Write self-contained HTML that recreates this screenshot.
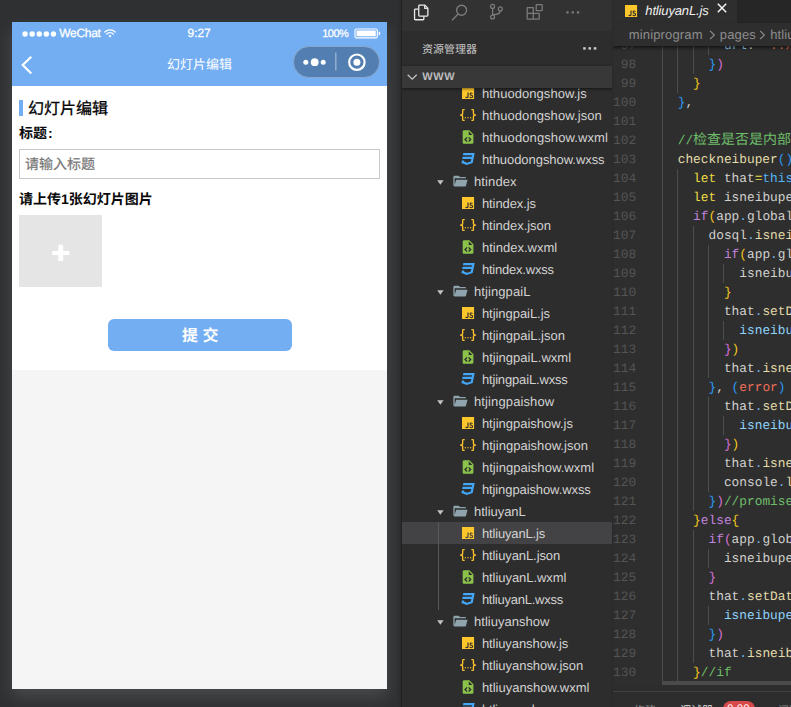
<!DOCTYPE html>
<html lang="zh-CN">
<head>
<meta charset="utf-8">
<title>幻灯片编辑 - htliuyanL.js</title>
<style>
*{box-sizing:border-box;margin:0;padding:0}
html,body{width:791px;height:707px;overflow:hidden;background:#2f3032;font-family:"Liberation Sans",sans-serif;text-rendering:geometricPrecision}
#app{position:relative;width:791px;height:707px;overflow:hidden;background:#2f3032}
.abs{position:absolute}
/* ---------- simulator ---------- */
#sim{position:absolute;left:0;top:0;width:401px;height:707px;background:linear-gradient(90deg,#2f3032 0,#2f3032 397px,#2a2b2d 401px)}
#phone{position:absolute;left:12px;top:22px;width:375px;height:667px;background:#f5f5f5;box-shadow:0 8px 16px 0 rgba(255,255,255,.13);overflow:hidden}
#hdr{position:absolute;left:0;top:0;width:375px;height:64px;background:#74aef2;color:#fff}
#page{position:absolute;left:0;top:64px;width:375px;height:284px;background:#fff}
.st{position:absolute;white-space:pre;color:#fff;-webkit-text-stroke:0.25px #fff}
#caps{position:absolute;left:280.7px;top:23.6px;width:87px;height:32px;border-radius:16px;background:#527eb1;border:1px solid #86a6cb}
/* ---------- sidebar ---------- */
#split{position:absolute;left:401px;top:0;width:1px;height:707px;background:#222223}
#side{position:absolute;left:402px;top:0;width:211px;height:707px;background:#2d2d2d;overflow:hidden}
#act{position:absolute;left:0;top:0;width:211px;height:30.5px;background:#323233}
#www{position:absolute;left:0;top:66px;width:211px;height:22px;background:#383839;box-shadow:0 1px 3px rgba(0,0,0,.55);z-index:3}
.row{position:absolute;left:0;width:211px;height:22px}
.row.sel{background:#434345}
.ic{position:absolute;display:block;overflow:visible}
.lbl{position:absolute;top:0.6px;height:22px;line-height:21px;font-size:13px;color:#d2d2d2;white-space:pre}
/* ---------- editor ---------- */
#ed{position:absolute;left:613px;top:0;width:178px;height:707px;background:#2e2e2e;overflow:hidden}
#tabs{position:absolute;left:0;top:0;width:178px;height:23px;background:#262627}
#tab{position:absolute;left:0;top:0;width:124px;height:23px;background:#2e2e2e}
#bc{position:absolute;left:0;top:23px;width:178px;height:23px;background:#2e2e2e;color:#8d8d8d;font-size:13px;line-height:23.4px;white-space:pre;box-shadow:0 2px 3px rgba(0,0,0,.55);z-index:4}
#codewrap{position:absolute;left:0;top:46px;width:178px;height:639px;overflow:hidden}
#code{position:absolute;left:0;top:-46px;width:400px;height:707px;font-family:"Liberation Mono",monospace;font-size:12.83px}
.ln{position:absolute;left:0;width:400px;height:19px;line-height:19px;white-space:pre}
.no{position:absolute;left:0;width:23.2px;text-align:right;color:#545454}
.gd{position:absolute;top:0;width:1px;height:19px;background:#4d4d4d}
.tx{position:absolute;top:0}
.g{color:#f2c81e}.p{color:#d670d6}.b{color:#2b9bf5}.k{color:#c283dc}.y{color:#efdc45}.f{color:#e3dcaa}
.v{color:#8fd3fb}.w{color:#d2d2ce}.c{color:#6fbf6a}.s{color:#ee6f59}.d{color:#6db3ea}.t{color:#52b4f5}
#hs{position:absolute;left:49.4px;top:681px;width:140px;height:4px;background:#4b4b4b}
#panel{position:absolute;left:0;top:685px;width:178px;height:22px;background:#2d2d2d}
svg text{font-family:"Liberation Sans","Noto Sans CJK SC",sans-serif}
</style>
</head>
<body>
<div id="app">

<!-- ================= simulator ================= -->
<div id="sim">
 <div id="phone">
  <div id="hdr">
   <!-- status bar -->
   <svg class="abs" style="left:9.6px;top:8.8px" width="36" height="6" viewBox="0 0 36 6"><g fill="#fff"><circle cx="3.05" cy="3" r="2.7"/><circle cx="10.15" cy="3" r="2.7"/><circle cx="17.25" cy="3" r="2.7"/><circle cx="24.35" cy="3" r="2.7"/><circle cx="31.45" cy="3" r="2.7"/></g></svg>
   <span class="st" style="left:47.2px;top:4px;font-size:12px;line-height:14px;letter-spacing:-0.291px">WeChat</span>
   <svg class="abs" style="left:92.4px;top:7.2px" width="12" height="9" viewBox="0 0 12 9"><g fill="none" stroke="#fff" stroke-width="1.25" stroke-linecap="round"><path d="M0.800 3.000a7.300 7.300 0 0 1 10.400 0"/><path d="M2.700 5.000a4.600 4.600 0 0 1 6.600 0"/></g><path d="M4.500 6.800a2.100 2.100 0 0 1 3.000 0l-1.500 1.700z" fill="#fff"/></svg>
   <span class="st" style="left:175.6px;top:4px;font-size:12px;line-height:14px;letter-spacing:-0.1px">9:27</span>
   <span class="st" style="left:310.2px;top:6px;font-size:11px;line-height:13px;letter-spacing:-0.483px">100%</span>
   <svg class="abs" style="left:341.5px;top:5.6px" width="28" height="11" viewBox="0 0 28 11"><rect x="1.000" y="1.000" width="22.300" height="8.900" rx="1.500" fill="none" stroke="#fff" stroke-width="1.100"/><rect x="2.550" y="2.550" width="19.200" height="5.800" rx="0.400" fill="#fff"/><path d="M24.700 3.600q1.600 0.300 1.600 1.800t-1.600 1.800z" fill="#fff"/></svg>
   <!-- nav bar -->
   <svg class="abs" style="left:9px;top:33px" width="12" height="20" viewBox="0 0 12 20"><path d="M10.300 1.800l-8.600 8.300 8.600 8.300" fill="none" stroke="#fff" stroke-width="2.150"/></svg>
   <div class="abs" style="left:154.600px;top:35.600px"><svg role="img" aria-label="幻灯片编辑" width="65.00" height="13.00" viewBox="0 -11.44 65.00 13.00" style="display:block;overflow:visible;" ><title>幻灯片编辑</title><text x="0" y="0" font-size="13" fill="#fff">幻灯片编辑</text></svg></div>
   <div id="caps">
    <svg class="abs" style="left:0;top:0" width="85" height="30" viewBox="0 0 85 30"><circle cx="11.800" cy="15.200" r="2.500" fill="#fff"/><circle cx="20.700" cy="15.200" r="3.900" fill="#fff"/><circle cx="29.200" cy="15.200" r="2.500" fill="#fff"/><rect x="41.300" y="5.600" width="1.1" height="17.800" fill="#a9c0dd"/><circle cx="62.900" cy="15.200" r="7.700" fill="none" stroke="#fff" stroke-width="2.2"/><circle cx="62.900" cy="15.200" r="3.500" fill="#fff"/></svg>
   </div>
  </div>
  <div id="page">
   <div class="abs" style="left:7px;top:14px;width:4px;height:15.500px;background:#74aef2"></div>
   <div class="abs" style="left:16.300px;top:13.800px"><svg role="img" aria-label="幻灯片编辑" width="80.00" height="16.00" viewBox="0 -14.08 80.00 16.00" style="display:block;overflow:visible;" ><title>幻灯片编辑</title><text x="0" y="0" font-size="16" fill="#000" stroke="#000" stroke-width="0.3">幻灯片编辑</text></svg></div>
   <div class="abs" style="left:7.200px;top:40.000px;white-space:nowrap;font-size:0;line-height:0"><svg role="img" aria-label="标题" width="28.00" height="14.00" viewBox="0 -12.32 28.00 14.00" style="display:block;overflow:visible;display:inline-block;" ><title>标题</title><text x="0" y="0" font-size="14" font-weight="bold" fill="#0a0a0a">标题</text></svg><svg role="img" aria-label=":" width="4.55" height="14.00" viewBox="0 -12.32 4.55 14.00" style="display:block;overflow:visible;display:inline-block;margin-left:1.3px;" ><title>:</title><text x="0" y="0" font-size="14" font-weight="bold" fill="#0a0a0a">:</text></svg></div>
   <div class="abs" style="left:7px;top:63px;width:361px;height:30px;border:1px solid #c8c8c8;background:#fff"></div>
   <div class="abs" style="left:12.800px;top:71.000px"><svg role="img" aria-label="请输入标题" width="70.00" height="14.00" viewBox="0 -12.32 70.00 14.00" style="display:block;overflow:visible;" ><title>请输入标题</title><text x="0" y="0" font-size="14" fill="#777777" stroke="#777777" stroke-width="0.2">请输入标题</text></svg></div>
   <div class="abs" style="left:7.200px;top:105.600px"><svg role="img" aria-label="请上传1张幻灯片图片" width="134.26" height="14.00" viewBox="0 -12.32 134.26 14.00" style="display:block;overflow:visible;" ><title>请上传1张幻灯片图片</title><text x="0" y="0" font-size="14" font-weight="bold" fill="#0a0a0a">请上传1张幻灯片图片</text></svg></div>
   <div class="abs" style="left:7px;top:129px;width:83px;height:71.500px;background:#e5e5e5">
     <svg class="abs" style="left:0;top:0" width="83" height="72" viewBox="0 0 83 72"><path d="M33.300 36.000h17.000v4.000h-17.000zM39.350 29.800h4.800v16.300h-4.800z" fill="#fff"/></svg>
   </div>
   <div class="abs" style="left:96px;top:233px;width:184px;height:32px;border-radius:6px;background:#74aef2"></div>
   <div class="abs" style="left:169.800px;top:241.000px"><svg role="img" aria-label="提 交" width="36.80" height="16.00" viewBox="0 -14.08 36.80 16.00" style="display:block;overflow:visible;" ><title>提 交</title><text x="0" y="0" font-size="16" font-weight="bold" fill="#fff" xml:space="preserve">提 交</text></svg></div>
  </div>
 </div>
</div>
<div id="split"></div>

<!-- ================= sidebar ================= -->
<div id="side">
 <div id="act">
  <!-- files -->
  <svg class="abs" style="left:10.500px;top:3.500px" width="17" height="17" viewBox="0 0 17 17"><g fill="none" stroke="#e9e9e9" stroke-width="1.300" stroke-linejoin="round"><path d="M6.550 1.150h5.300l3.000 3.000v7.100a0.800 0.800 0 0 1-0.800 0.800h-7.500a0.800 0.800 0 0 1-0.800-0.800v-9.300a0.800 0.800 0 0 1 0.800-0.800z"/><path d="M5.400 5.050h-3.050a0.800 0.800 0 0 0-0.800 0.800v9.100a0.800 0.800 0 0 0 0.800 0.800h7.700a0.800 0.800 0 0 0 0.800-0.800v-2.600"/><path d="M11.700 1.300v3.000h3.000"/></g></svg>
  <!-- search -->
  <svg class="abs" style="left:48.500px;top:3.500px" width="17" height="17" viewBox="0 0 17 17"><g fill="none" stroke="#7c7c7c" stroke-width="1.350"><circle cx="10.600" cy="6.200" r="5.000"/><path d="M7.200 10.000l-6.200 6.300"/></g></svg>
  <!-- scm -->
  <svg class="abs" style="left:86.500px;top:3.200px" width="16" height="17" viewBox="0 0 16 17"><g fill="none" stroke="#7c7c7c" stroke-width="1.250"><circle cx="3.600" cy="3.400" r="1.950"/><circle cx="3.600" cy="14.000" r="1.950"/><circle cx="11.300" cy="5.900" r="1.950"/><path d="M3.600 5.400v6.600M11.300 7.900c0 2.600-2.300 3.200-7.500 3.900"/></g></svg>
  <!-- extensions -->
  <svg class="abs" style="left:123.800px;top:3.300px" width="18" height="17" viewBox="0 0 18 17"><g fill="none" stroke="#7c7c7c" stroke-width="1.250" stroke-linejoin="round"><path d="M1.200 4.600h6.100v11.400h-6.100zM1.200 10.300h12.000M7.300 10.300h5.900v5.700h-5.900"/><rect x="10.200" y="1.700" width="6.000" height="5.800" rx="0.600"/></g></svg>
  <!-- more -->
  <svg class="abs" style="left:164.200px;top:10.800px" width="14" height="3" viewBox="0 0 14 3"><g fill="#7c7c7c"><rect x="0.300" y="0.300" width="2.300" height="2.200"/><rect x="5.600" y="0.300" width="2.300" height="2.200"/><rect x="10.900" y="0.300" width="2.300" height="2.200"/></g></svg>
 </div>
 <div class="abs" style="left:19.800px;top:43.300px"><svg role="img" aria-label="资源管理器" width="55.00" height="11.00" viewBox="0 -9.68 55.00 11.00" style="display:block;overflow:visible;" ><title>资源管理器</title><text x="0" y="0" font-size="11" fill="#c9c9c9">资源管理器</text></svg></div>
 <svg class="abs" style="left:180.600px;top:47.400px" width="14" height="3" viewBox="0 0 14 3"><g fill="#cfcfcf"><rect x="0.200" y="0.200" width="2.500" height="2.400"/><rect x="5.500" y="0.200" width="2.500" height="2.400"/><rect x="10.800" y="0.200" width="2.500" height="2.400"/></g></svg>
 <div class="abs" style="left:210px;top:0;width:1px;height:707px;background:#292929;z-index:5"></div>
 <div id="www">
  <svg class="abs" style="left:4.500px;top:8.100px" width="12" height="7" viewBox="0 0 12 7"><path d="M0.700 0.700l4.500 4.400 4.500-4.400" fill="none" stroke="#c5c5c5" stroke-width="1.250"/></svg>
  <span class="abs" style="left:20.300px;top:1.3px;line-height:21.500px;font-size:11px;font-weight:bold;color:#bcbcbc;letter-spacing:0.551px">WWW</span>
 </div>
 <div class="abs" style="left:36.400px;top:522px;width:1px;height:88px;background:#585858;z-index:2"></div>
<div class="row" style="top:82.0px"><svg class="ic" style="left:57.85px;top:2.90px" width="16.1" height="16.1" viewBox="0 0 24 24"><path fill="#fdc72b" d="M3,3H21V21H3V3M7.73,18.04C8.13,18.89 8.92,19.59 10.27,19.59C11.77,19.59 12.8,18.79 12.8,17.04V11.26H11.1V17C11.1,17.86 10.75,18.08 10.2,18.08C9.62,18.08 9.38,17.68 9.11,17.21L7.73,18.04M13.71,17.86C14.21,18.84 15.22,19.59 16.8,19.59C18.4,19.59 19.6,18.76 19.6,17.23C19.6,15.82 18.79,15.19 17.35,14.57L16.93,14.39C16.2,14.08 15.89,13.87 15.89,13.37C15.89,12.96 16.2,12.64 16.7,12.64C17.18,12.64 17.5,12.85 17.79,13.37L19.1,12.5C18.55,11.54 17.77,11.17 16.7,11.17C15.19,11.17 14.22,12.13 14.22,13.4C14.22,14.78 15.03,15.43 16.25,15.95L16.67,16.13C17.45,16.47 17.91,16.68 17.91,17.26C17.91,17.74 17.46,18.09 16.76,18.09C15.93,18.09 15.45,17.66 15.09,17.06L13.71,17.86Z"/></svg><span class="lbl" style="left:79.9px;letter-spacing:0.055px">hthuodongshow.js</span></div>
<div class="row" style="top:104.0px"><svg class="ic" style="left:57.85px;top:2.90px" width="16.1" height="16.1" viewBox="0 0 24 24"><path fill="#fbc02d" d="M5,3H7V5H5V10A2,2 0 0,1 3,12A2,2 0 0,1 5,14V19H7V21H5C3.93,20.73 3,20.1 3,19V15A2,2 0 0,0 1,13H0V11H1A2,2 0 0,0 3,9V5A2,2 0 0,1 5,3M19,3A2,2 0 0,1 21,5V9A2,2 0 0,0 23,11H24V13H23A2,2 0 0,0 21,15V19A2,2 0 0,1 19,21H17V19H19V14A2,2 0 0,1 21,12A2,2 0 0,1 19,10V5H17V3H19M12,15A1,1 0 0,1 13,16A1,1 0 0,1 12,17A1,1 0 0,1 11,16A1,1 0 0,1 12,15M8,15A1,1 0 0,1 9,16A1,1 0 0,1 8,17A1,1 0 0,1 7,16A1,1 0 0,1 8,15M16,15A1,1 0 0,1 17,16A1,1 0 0,1 16,17A1,1 0 0,1 15,16A1,1 0 0,1 16,15Z"/></svg><span class="lbl" style="left:79.9px;letter-spacing:0.077px">hthuodongshow.json</span></div>
<div class="row" style="top:126.0px"><svg class="ic" style="left:57.85px;top:2.90px" width="16.1" height="16.1" viewBox="0 0 24 24"><path fill="#8bc34a" d="M13,9H18.5L13,3.5V9M6,2H14L20,8V20A2,2 0 0,1 18,22H6C4.89,22 4,21.1 4,20V4C4,2.89 4.89,2 6,2M6.12,15.5L9.86,19.24L11.28,17.83L8.95,15.5L11.28,13.17L9.86,11.76L6.12,15.5M17.28,15.5L13.54,11.76L12.12,13.17L14.45,15.5L12.12,17.83L13.54,19.24L17.28,15.5Z"/></svg><span class="lbl" style="left:79.9px;letter-spacing:0.102px">hthuodongshow.wxml</span></div>
<div class="row" style="top:148.0px"><svg class="ic" style="left:57.85px;top:2.90px" width="16.1" height="16.1" viewBox="0 0 24 24"><path fill="#42a5f5" d="M5,3L4.35,6.34H17.94L17.5,8.5H3.92L3.26,11.83H16.85L16.09,15.64L10.61,17.45L5.86,15.64L6.19,14H2.85L2.06,18L9.91,21L18.96,18L20.16,11.97L20.4,10.76L21.94,3H5Z"/></svg><span class="lbl" style="left:79.9px;letter-spacing:-0.050px">hthuodongshow.wxss</span></div>
<div class="row" style="top:170.0px"><svg class="ic" style="left:35.30000000000001px;top:9.6px" width="7" height="5" viewBox="0 0 7 5"><path d="M0.200 0.200h6.400l-3.200 4.500z" fill="#c2c2c2"/></svg><svg class="ic" style="left:49.80px;top:2.70px" width="16.1" height="16.1" viewBox="0 0 24 24"><path fill="#90a4ae" d="M19,20H4C2.89,20 2,19.1 2,18V6C2,4.89 2.89,4 4,4H10L12,6H19A2,2 0 0,1 21,8H21L4,8V18L6.14,10H23.21L20.93,18.5C20.7,19.37 19.92,20 19,20Z"/></svg><span class="lbl" style="left:72.0px;letter-spacing:0.107px">htindex</span></div>
<div class="row" style="top:192.0px"><svg class="ic" style="left:57.85px;top:2.90px" width="16.1" height="16.1" viewBox="0 0 24 24"><path fill="#fdc72b" d="M3,3H21V21H3V3M7.73,18.04C8.13,18.89 8.92,19.59 10.27,19.59C11.77,19.59 12.8,18.79 12.8,17.04V11.26H11.1V17C11.1,17.86 10.75,18.08 10.2,18.08C9.62,18.08 9.38,17.68 9.11,17.21L7.73,18.04M13.71,17.86C14.21,18.84 15.22,19.59 16.8,19.59C18.4,19.59 19.6,18.76 19.6,17.23C19.6,15.82 18.79,15.19 17.35,14.57L16.93,14.39C16.2,14.08 15.89,13.87 15.89,13.37C15.89,12.96 16.2,12.64 16.7,12.64C17.18,12.64 17.5,12.85 17.79,13.37L19.1,12.5C18.55,11.54 17.77,11.17 16.7,11.17C15.19,11.17 14.22,12.13 14.22,13.4C14.22,14.78 15.03,15.43 16.25,15.95L16.67,16.13C17.45,16.47 17.91,16.68 17.91,17.26C17.91,17.74 17.46,18.09 16.76,18.09C15.93,18.09 15.45,17.66 15.09,17.06L13.71,17.86Z"/></svg><span class="lbl" style="left:79.9px;letter-spacing:-0.077px">htindex.js</span></div>
<div class="row" style="top:214.0px"><svg class="ic" style="left:57.85px;top:2.90px" width="16.1" height="16.1" viewBox="0 0 24 24"><path fill="#fbc02d" d="M5,3H7V5H5V10A2,2 0 0,1 3,12A2,2 0 0,1 5,14V19H7V21H5C3.93,20.73 3,20.1 3,19V15A2,2 0 0,0 1,13H0V11H1A2,2 0 0,0 3,9V5A2,2 0 0,1 5,3M19,3A2,2 0 0,1 21,5V9A2,2 0 0,0 23,11H24V13H23A2,2 0 0,0 21,15V19A2,2 0 0,1 19,21H17V19H19V14A2,2 0 0,1 21,12A2,2 0 0,1 19,10V5H17V3H19M12,15A1,1 0 0,1 13,16A1,1 0 0,1 12,17A1,1 0 0,1 11,16A1,1 0 0,1 12,15M8,15A1,1 0 0,1 9,16A1,1 0 0,1 8,17A1,1 0 0,1 7,16A1,1 0 0,1 8,15M16,15A1,1 0 0,1 17,16A1,1 0 0,1 16,17A1,1 0 0,1 15,16A1,1 0 0,1 16,15Z"/></svg><span class="lbl" style="left:79.9px;letter-spacing:-0.022px">htindex.json</span></div>
<div class="row" style="top:236.0px"><svg class="ic" style="left:57.85px;top:2.90px" width="16.1" height="16.1" viewBox="0 0 24 24"><path fill="#8bc34a" d="M13,9H18.5L13,3.5V9M6,2H14L20,8V20A2,2 0 0,1 18,22H6C4.89,22 4,21.1 4,20V4C4,2.89 4.89,2 6,2M6.12,15.5L9.86,19.24L11.28,17.83L8.95,15.5L11.28,13.17L9.86,11.76L6.12,15.5M17.28,15.5L13.54,11.76L12.12,13.17L14.45,15.5L12.12,17.83L13.54,19.24L17.28,15.5Z"/></svg><span class="lbl" style="left:79.9px;letter-spacing:0.015px">htindex.wxml</span></div>
<div class="row" style="top:258.0px"><svg class="ic" style="left:57.85px;top:2.90px" width="16.1" height="16.1" viewBox="0 0 24 24"><path fill="#42a5f5" d="M5,3L4.35,6.34H17.94L17.5,8.5H3.92L3.26,11.83H16.85L16.09,15.64L10.61,17.45L5.86,15.64L6.19,14H2.85L2.06,18L9.91,21L18.96,18L20.16,11.97L20.4,10.76L21.94,3H5Z"/></svg><span class="lbl" style="left:79.9px;letter-spacing:-0.212px">htindex.wxss</span></div>
<div class="row" style="top:280.0px"><svg class="ic" style="left:35.30000000000001px;top:9.6px" width="7" height="5" viewBox="0 0 7 5"><path d="M0.200 0.200h6.400l-3.200 4.500z" fill="#c2c2c2"/></svg><svg class="ic" style="left:49.80px;top:2.70px" width="16.1" height="16.1" viewBox="0 0 24 24"><path fill="#90a4ae" d="M19,20H4C2.89,20 2,19.1 2,18V6C2,4.89 2.89,4 4,4H10L12,6H19A2,2 0 0,1 21,8H21L4,8V18L6.14,10H23.21L20.93,18.5C20.7,19.37 19.92,20 19,20Z"/></svg><span class="lbl" style="left:72.0px;letter-spacing:0.091px">htjingpaiL</span></div>
<div class="row" style="top:302.0px"><svg class="ic" style="left:57.85px;top:2.90px" width="16.1" height="16.1" viewBox="0 0 24 24"><path fill="#fdc72b" d="M3,3H21V21H3V3M7.73,18.04C8.13,18.89 8.92,19.59 10.27,19.59C11.77,19.59 12.8,18.79 12.8,17.04V11.26H11.1V17C11.1,17.86 10.75,18.08 10.2,18.08C9.62,18.08 9.38,17.68 9.11,17.21L7.73,18.04M13.71,17.86C14.21,18.84 15.22,19.59 16.8,19.59C18.4,19.59 19.6,18.76 19.6,17.23C19.6,15.82 18.79,15.19 17.35,14.57L16.93,14.39C16.2,14.08 15.89,13.87 15.89,13.37C15.89,12.96 16.2,12.64 16.7,12.64C17.18,12.64 17.5,12.85 17.79,13.37L19.1,12.5C18.55,11.54 17.77,11.17 16.7,11.17C15.19,11.17 14.22,12.13 14.22,13.4C14.22,14.78 15.03,15.43 16.25,15.95L16.67,16.13C17.45,16.47 17.91,16.68 17.91,17.26C17.91,17.74 17.46,18.09 16.76,18.09C15.93,18.09 15.45,17.66 15.09,17.06L13.71,17.86Z"/></svg><span class="lbl" style="left:79.9px;letter-spacing:-0.046px">htjingpaiL.js</span></div>
<div class="row" style="top:324.0px"><svg class="ic" style="left:57.85px;top:2.90px" width="16.1" height="16.1" viewBox="0 0 24 24"><path fill="#fbc02d" d="M5,3H7V5H5V10A2,2 0 0,1 3,12A2,2 0 0,1 5,14V19H7V21H5C3.93,20.73 3,20.1 3,19V15A2,2 0 0,0 1,13H0V11H1A2,2 0 0,0 3,9V5A2,2 0 0,1 5,3M19,3A2,2 0 0,1 21,5V9A2,2 0 0,0 23,11H24V13H23A2,2 0 0,0 21,15V19A2,2 0 0,1 19,21H17V19H19V14A2,2 0 0,1 21,12A2,2 0 0,1 19,10V5H17V3H19M12,15A1,1 0 0,1 13,16A1,1 0 0,1 12,17A1,1 0 0,1 11,16A1,1 0 0,1 12,15M8,15A1,1 0 0,1 9,16A1,1 0 0,1 8,17A1,1 0 0,1 7,16A1,1 0 0,1 8,15M16,15A1,1 0 0,1 17,16A1,1 0 0,1 16,17A1,1 0 0,1 15,16A1,1 0 0,1 16,15Z"/></svg><span class="lbl" style="left:79.9px;letter-spacing:-0.006px">htjingpaiL.json</span></div>
<div class="row" style="top:346.0px"><svg class="ic" style="left:57.85px;top:2.90px" width="16.1" height="16.1" viewBox="0 0 24 24"><path fill="#8bc34a" d="M13,9H18.5L13,3.5V9M6,2H14L20,8V20A2,2 0 0,1 18,22H6C4.89,22 4,21.1 4,20V4C4,2.89 4.89,2 6,2M6.12,15.5L9.86,19.24L11.28,17.83L8.95,15.5L11.28,13.17L9.86,11.76L6.12,15.5M17.28,15.5L13.54,11.76L12.12,13.17L14.45,15.5L12.12,17.83L13.54,19.24L17.28,15.5Z"/></svg><span class="lbl" style="left:79.9px;letter-spacing:0.023px">htjingpaiL.wxml</span></div>
<div class="row" style="top:368.0px"><svg class="ic" style="left:57.85px;top:2.90px" width="16.1" height="16.1" viewBox="0 0 24 24"><path fill="#42a5f5" d="M5,3L4.35,6.34H17.94L17.5,8.5H3.92L3.26,11.83H16.85L16.09,15.64L10.61,17.45L5.86,15.64L6.19,14H2.85L2.06,18L9.91,21L18.96,18L20.16,11.97L20.4,10.76L21.94,3H5Z"/></svg><span class="lbl" style="left:79.9px;letter-spacing:-0.159px">htjingpaiL.wxss</span></div>
<div class="row" style="top:390.0px"><svg class="ic" style="left:35.30000000000001px;top:9.6px" width="7" height="5" viewBox="0 0 7 5"><path d="M0.200 0.200h6.400l-3.200 4.500z" fill="#c2c2c2"/></svg><svg class="ic" style="left:49.80px;top:2.70px" width="16.1" height="16.1" viewBox="0 0 24 24"><path fill="#90a4ae" d="M19,20H4C2.89,20 2,19.1 2,18V6C2,4.89 2.89,4 4,4H10L12,6H19A2,2 0 0,1 21,8H21L4,8V18L6.14,10H23.21L20.93,18.5C20.7,19.37 19.92,20 19,20Z"/></svg><span class="lbl" style="left:72.0px;letter-spacing:0.119px">htjingpaishow</span></div>
<div class="row" style="top:412.0px"><svg class="ic" style="left:57.85px;top:2.90px" width="16.1" height="16.1" viewBox="0 0 24 24"><path fill="#fdc72b" d="M3,3H21V21H3V3M7.73,18.04C8.13,18.89 8.92,19.59 10.27,19.59C11.77,19.59 12.8,18.79 12.8,17.04V11.26H11.1V17C11.1,17.86 10.75,18.08 10.2,18.08C9.62,18.08 9.38,17.68 9.11,17.21L7.73,18.04M13.71,17.86C14.21,18.84 15.22,19.59 16.8,19.59C18.4,19.59 19.6,18.76 19.6,17.23C19.6,15.82 18.79,15.19 17.35,14.57L16.93,14.39C16.2,14.08 15.89,13.87 15.89,13.37C15.89,12.96 16.2,12.64 16.7,12.64C17.18,12.64 17.5,12.85 17.79,13.37L19.1,12.5C18.55,11.54 17.77,11.17 16.7,11.17C15.19,11.17 14.22,12.13 14.22,13.4C14.22,14.78 15.03,15.43 16.25,15.95L16.67,16.13C17.45,16.47 17.91,16.68 17.91,17.26C17.91,17.74 17.46,18.09 16.76,18.09C15.93,18.09 15.45,17.66 15.09,17.06L13.71,17.86Z"/></svg><span class="lbl" style="left:79.9px;letter-spacing:0.002px">htjingpaishow.js</span></div>
<div class="row" style="top:434.0px"><svg class="ic" style="left:57.85px;top:2.90px" width="16.1" height="16.1" viewBox="0 0 24 24"><path fill="#fbc02d" d="M5,3H7V5H5V10A2,2 0 0,1 3,12A2,2 0 0,1 5,14V19H7V21H5C3.93,20.73 3,20.1 3,19V15A2,2 0 0,0 1,13H0V11H1A2,2 0 0,0 3,9V5A2,2 0 0,1 5,3M19,3A2,2 0 0,1 21,5V9A2,2 0 0,0 23,11H24V13H23A2,2 0 0,0 21,15V19A2,2 0 0,1 19,21H17V19H19V14A2,2 0 0,1 21,12A2,2 0 0,1 19,10V5H17V3H19M12,15A1,1 0 0,1 13,16A1,1 0 0,1 12,17A1,1 0 0,1 11,16A1,1 0 0,1 12,15M8,15A1,1 0 0,1 9,16A1,1 0 0,1 8,17A1,1 0 0,1 7,16A1,1 0 0,1 8,15M16,15A1,1 0 0,1 17,16A1,1 0 0,1 16,17A1,1 0 0,1 15,16A1,1 0 0,1 16,15Z"/></svg><span class="lbl" style="left:79.9px;letter-spacing:0.030px">htjingpaishow.json</span></div>
<div class="row" style="top:456.0px"><svg class="ic" style="left:57.85px;top:2.90px" width="16.1" height="16.1" viewBox="0 0 24 24"><path fill="#8bc34a" d="M13,9H18.5L13,3.5V9M6,2H14L20,8V20A2,2 0 0,1 18,22H6C4.89,22 4,21.1 4,20V4C4,2.89 4.89,2 6,2M6.12,15.5L9.86,19.24L11.28,17.83L8.95,15.5L11.28,13.17L9.86,11.76L6.12,15.5M17.28,15.5L13.54,11.76L12.12,13.17L14.45,15.5L12.12,17.83L13.54,19.24L17.28,15.5Z"/></svg><span class="lbl" style="left:79.9px;letter-spacing:0.054px">htjingpaishow.wxml</span></div>
<div class="row" style="top:478.0px"><svg class="ic" style="left:57.85px;top:2.90px" width="16.1" height="16.1" viewBox="0 0 24 24"><path fill="#42a5f5" d="M5,3L4.35,6.34H17.94L17.5,8.5H3.92L3.26,11.83H16.85L16.09,15.64L10.61,17.45L5.86,15.64L6.19,14H2.85L2.06,18L9.91,21L18.96,18L20.16,11.97L20.4,10.76L21.94,3H5Z"/></svg><span class="lbl" style="left:79.9px;letter-spacing:-0.097px">htjingpaishow.wxss</span></div>
<div class="row" style="top:500.0px"><svg class="ic" style="left:35.30000000000001px;top:9.6px" width="7" height="5" viewBox="0 0 7 5"><path d="M0.200 0.200h6.400l-3.200 4.500z" fill="#c2c2c2"/></svg><svg class="ic" style="left:49.80px;top:2.70px" width="16.1" height="16.1" viewBox="0 0 24 24"><path fill="#90a4ae" d="M19,20H4C2.89,20 2,19.1 2,18V6C2,4.89 2.89,4 4,4H10L12,6H19A2,2 0 0,1 21,8H21L4,8V18L6.14,10H23.21L20.93,18.5C20.7,19.37 19.92,20 19,20Z"/></svg><span class="lbl" style="left:72.0px;letter-spacing:-0.030px">htliuyanL</span></div>
<div class="row sel" style="top:522.0px"><svg class="ic" style="left:57.85px;top:2.90px" width="16.1" height="16.1" viewBox="0 0 24 24"><path fill="#fdc72b" d="M3,3H21V21H3V3M7.73,18.04C8.13,18.89 8.92,19.59 10.27,19.59C11.77,19.59 12.8,18.79 12.8,17.04V11.26H11.1V17C11.1,17.86 10.75,18.08 10.2,18.08C9.62,18.08 9.38,17.68 9.11,17.21L7.73,18.04M13.71,17.86C14.21,18.84 15.22,19.59 16.8,19.59C18.4,19.59 19.6,18.76 19.6,17.23C19.6,15.82 18.79,15.19 17.35,14.57L16.93,14.39C16.2,14.08 15.89,13.87 15.89,13.37C15.89,12.96 16.2,12.64 16.7,12.64C17.18,12.64 17.5,12.85 17.79,13.37L19.1,12.5C18.55,11.54 17.77,11.17 16.7,11.17C15.19,11.17 14.22,12.13 14.22,13.4C14.22,14.78 15.03,15.43 16.25,15.95L16.67,16.13C17.45,16.47 17.91,16.68 17.91,17.26C17.91,17.74 17.46,18.09 16.76,18.09C15.93,18.09 15.45,17.66 15.09,17.06L13.71,17.86Z"/></svg><span class="lbl" style="left:79.9px;letter-spacing:-0.149px">htliuyanL.js</span></div>
<div class="row" style="top:544.0px"><svg class="ic" style="left:57.85px;top:2.90px" width="16.1" height="16.1" viewBox="0 0 24 24"><path fill="#fbc02d" d="M5,3H7V5H5V10A2,2 0 0,1 3,12A2,2 0 0,1 5,14V19H7V21H5C3.93,20.73 3,20.1 3,19V15A2,2 0 0,0 1,13H0V11H1A2,2 0 0,0 3,9V5A2,2 0 0,1 5,3M19,3A2,2 0 0,1 21,5V9A2,2 0 0,0 23,11H24V13H23A2,2 0 0,0 21,15V19A2,2 0 0,1 19,21H17V19H19V14A2,2 0 0,1 21,12A2,2 0 0,1 19,10V5H17V3H19M12,15A1,1 0 0,1 13,16A1,1 0 0,1 12,17A1,1 0 0,1 11,16A1,1 0 0,1 12,15M8,15A1,1 0 0,1 9,16A1,1 0 0,1 8,17A1,1 0 0,1 7,16A1,1 0 0,1 8,15M16,15A1,1 0 0,1 17,16A1,1 0 0,1 16,17A1,1 0 0,1 15,16A1,1 0 0,1 16,15Z"/></svg><span class="lbl" style="left:79.9px;letter-spacing:-0.091px">htliuyanL.json</span></div>
<div class="row" style="top:566.0px"><svg class="ic" style="left:57.85px;top:2.90px" width="16.1" height="16.1" viewBox="0 0 24 24"><path fill="#8bc34a" d="M13,9H18.5L13,3.5V9M6,2H14L20,8V20A2,2 0 0,1 18,22H6C4.89,22 4,21.1 4,20V4C4,2.89 4.89,2 6,2M6.12,15.5L9.86,19.24L11.28,17.83L8.95,15.5L11.28,13.17L9.86,11.76L6.12,15.5M17.28,15.5L13.54,11.76L12.12,13.17L14.45,15.5L12.12,17.83L13.54,19.24L17.28,15.5Z"/></svg><span class="lbl" style="left:79.9px;letter-spacing:-0.060px">htliuyanL.wxml</span></div>
<div class="row" style="top:588.0px"><svg class="ic" style="left:57.85px;top:2.90px" width="16.1" height="16.1" viewBox="0 0 24 24"><path fill="#42a5f5" d="M5,3L4.35,6.34H17.94L17.5,8.5H3.92L3.26,11.83H16.85L16.09,15.64L10.61,17.45L5.86,15.64L6.19,14H2.85L2.06,18L9.91,21L18.96,18L20.16,11.97L20.4,10.76L21.94,3H5Z"/></svg><span class="lbl" style="left:79.9px;letter-spacing:-0.254px">htliuyanL.wxss</span></div>
<div class="row" style="top:610.0px"><svg class="ic" style="left:35.30000000000001px;top:9.6px" width="7" height="5" viewBox="0 0 7 5"><path d="M0.200 0.200h6.400l-3.200 4.500z" fill="#c2c2c2"/></svg><svg class="ic" style="left:49.80px;top:2.70px" width="16.1" height="16.1" viewBox="0 0 24 24"><path fill="#90a4ae" d="M19,20H4C2.89,20 2,19.1 2,18V6C2,4.89 2.89,4 4,4H10L12,6H19A2,2 0 0,1 21,8H21L4,8V18L6.14,10H23.21L20.93,18.5C20.7,19.37 19.92,20 19,20Z"/></svg><span class="lbl" style="left:72.0px;letter-spacing:0.031px">htliuyanshow</span></div>
<div class="row" style="top:632.0px"><svg class="ic" style="left:57.85px;top:2.90px" width="16.1" height="16.1" viewBox="0 0 24 24"><path fill="#fdc72b" d="M3,3H21V21H3V3M7.73,18.04C8.13,18.89 8.92,19.59 10.27,19.59C11.77,19.59 12.8,18.79 12.8,17.04V11.26H11.1V17C11.1,17.86 10.75,18.08 10.2,18.08C9.62,18.08 9.38,17.68 9.11,17.21L7.73,18.04M13.71,17.86C14.21,18.84 15.22,19.59 16.8,19.59C18.4,19.59 19.6,18.76 19.6,17.23C19.6,15.82 18.79,15.19 17.35,14.57L16.93,14.39C16.2,14.08 15.89,13.87 15.89,13.37C15.89,12.96 16.2,12.64 16.7,12.64C17.18,12.64 17.5,12.85 17.79,13.37L19.1,12.5C18.55,11.54 17.77,11.17 16.7,11.17C15.19,11.17 14.22,12.13 14.22,13.4C14.22,14.78 15.03,15.43 16.25,15.95L16.67,16.13C17.45,16.47 17.91,16.68 17.91,17.26C17.91,17.74 17.46,18.09 16.76,18.09C15.93,18.09 15.45,17.66 15.09,17.06L13.71,17.86Z"/></svg><span class="lbl" style="left:79.9px;letter-spacing:-0.077px">htliuyanshow.js</span></div>
<div class="row" style="top:654.0px"><svg class="ic" style="left:57.85px;top:2.90px" width="16.1" height="16.1" viewBox="0 0 24 24"><path fill="#fbc02d" d="M5,3H7V5H5V10A2,2 0 0,1 3,12A2,2 0 0,1 5,14V19H7V21H5C3.93,20.73 3,20.1 3,19V15A2,2 0 0,0 1,13H0V11H1A2,2 0 0,0 3,9V5A2,2 0 0,1 5,3M19,3A2,2 0 0,1 21,5V9A2,2 0 0,0 23,11H24V13H23A2,2 0 0,0 21,15V19A2,2 0 0,1 19,21H17V19H19V14A2,2 0 0,1 21,12A2,2 0 0,1 19,10V5H17V3H19M12,15A1,1 0 0,1 13,16A1,1 0 0,1 12,17A1,1 0 0,1 11,16A1,1 0 0,1 12,15M8,15A1,1 0 0,1 9,16A1,1 0 0,1 8,17A1,1 0 0,1 7,16A1,1 0 0,1 8,15M16,15A1,1 0 0,1 17,16A1,1 0 0,1 16,17A1,1 0 0,1 15,16A1,1 0 0,1 16,15Z"/></svg><span class="lbl" style="left:79.9px;letter-spacing:-0.038px">htliuyanshow.json</span></div>
<div class="row" style="top:676.0px"><svg class="ic" style="left:57.85px;top:2.90px" width="16.1" height="16.1" viewBox="0 0 24 24"><path fill="#8bc34a" d="M13,9H18.5L13,3.5V9M6,2H14L20,8V20A2,2 0 0,1 18,22H6C4.89,22 4,21.1 4,20V4C4,2.89 4.89,2 6,2M6.12,15.5L9.86,19.24L11.28,17.83L8.95,15.5L11.28,13.17L9.86,11.76L6.12,15.5M17.28,15.5L13.54,11.76L12.12,13.17L14.45,15.5L12.12,17.83L13.54,19.24L17.28,15.5Z"/></svg><span class="lbl" style="left:79.9px;letter-spacing:-0.012px">htliuyanshow.wxml</span></div>
<div class="row" style="top:698.0px"><svg class="ic" style="left:57.85px;top:2.90px" width="16.1" height="16.1" viewBox="0 0 24 24"><path fill="#42a5f5" d="M5,3L4.35,6.34H17.94L17.5,8.5H3.92L3.26,11.83H16.85L16.09,15.64L10.61,17.45L5.86,15.64L6.19,14H2.85L2.06,18L9.91,21L18.96,18L20.16,11.97L20.4,10.76L21.94,3H5Z"/></svg><span class="lbl" style="left:79.9px;letter-spacing:-0.172px">htliuyanshow.wxss</span></div>
</div>

<!-- ================= editor ================= -->
<div id="ed">
 <div id="tabs">
  <div id="tab">
   <svg class="ic" style="left:9.70px;top:2.70px" width="16.1" height="16.1" viewBox="0 0 24 24"><path fill="#fdc72b" d="M3,3H21V21H3V3M7.73,18.04C8.13,18.89 8.92,19.59 10.27,19.59C11.77,19.59 12.8,18.79 12.8,17.04V11.26H11.1V17C11.1,17.86 10.75,18.08 10.2,18.08C9.62,18.08 9.38,17.68 9.11,17.21L7.73,18.04M13.71,17.86C14.21,18.84 15.22,19.59 16.8,19.59C18.4,19.59 19.6,18.76 19.6,17.23C19.6,15.82 18.79,15.19 17.35,14.57L16.93,14.39C16.2,14.08 15.89,13.87 15.89,13.37C15.89,12.96 16.2,12.64 16.7,12.64C17.18,12.64 17.5,12.85 17.79,13.37L19.1,12.5C18.55,11.54 17.77,11.17 16.7,11.17C15.19,11.17 14.22,12.13 14.22,13.4C14.22,14.78 15.03,15.43 16.25,15.95L16.67,16.13C17.45,16.47 17.91,16.68 17.91,17.26C17.91,17.74 17.46,18.09 16.76,18.09C15.93,18.09 15.45,17.66 15.09,17.06L13.71,17.86Z"/></svg>
   <span class="abs" style="left:32.300px;top:0;line-height:21.500px;font-size:13px;font-style:italic;color:#f2f2f2;white-space:pre;letter-spacing:-0.149px">htliuyanL.js</span>
   <svg class="abs" style="left:103.700px;top:3.300px" width="10" height="10" viewBox="0 0 10 10"><path d="M0.800 0.800l8.400 8.400M9.200 0.800l-8.400 8.400" stroke="#f4f4f4" stroke-width="1.500" fill="none"/></svg>
  </div>
 </div>
 <div id="bc"><span class="abs" style="left:15.800px;top:0;letter-spacing:0.15px">miniprogram</span><svg class="abs" style="left:95.500px;top:7.000px" width="7" height="10" viewBox="0 0 7 10"><path d="M1.000 0.800l4.400 4.200-4.400 4.200" fill="none" stroke="#8d8d8d" stroke-width="1.100"/></svg><span class="abs" style="left:106.800px;top:0;letter-spacing:0.15px">pages</span><svg class="abs" style="left:145.800px;top:7.000px" width="7" height="10" viewBox="0 0 7 10"><path d="M1.000 0.800l4.400 4.200-4.400 4.200" fill="none" stroke="#8d8d8d" stroke-width="1.100"/></svg><span class="abs" style="left:157.200px;top:0;letter-spacing:0.1px">htliuyanL</span></div>
 <div id="codewrap"><div id="code">
<div class="ln" style="top:35.70px"><span class="no">97</span><i class="gd" style="left:49px"></i><i class="gd" style="left:64px"></i><i class="gd" style="left:80px"></i><i class="gd" style="left:95px"></i><span class="tx" style="left:110.90px"><span class="v">url</span><span class="w">: </span><span class="s">'../p</span></span></div>
<div class="ln" style="top:54.70px"><span class="no">98</span><i class="gd" style="left:49px"></i><i class="gd" style="left:64px"></i><i class="gd" style="left:80px"></i><span class="tx" style="left:95.50px"><span class="b">}</span><span class="p">)</span></span></div>
<div class="ln" style="top:73.70px"><span class="no">99</span><i class="gd" style="left:49px"></i><i class="gd" style="left:64px"></i><span class="tx" style="left:80.10px"><span class="g">}</span></span></div>
<div class="ln" style="top:92.70px"><span class="no">100</span><i class="gd" style="left:49px"></i><span class="tx" style="left:64.70px"><span class="b">}</span><span class="w">,</span></span></div>
<div class="ln" style="top:111.70px"><span class="no">101</span><i class="gd" style="left:49px"></i><span class="tx" style="left:64.70px"></span></div>
<div class="ln" style="top:130.70px"><span class="no">102</span><i class="gd" style="left:49px"></i><span class="tx" style="left:64.70px"><span class="c">//</span><svg role="img" aria-label="检查是否是内部" width="98.00" height="14.00" viewBox="0 -12.32 98.00 14.00" style="display:block;overflow:visible;display:inline-block;vertical-align:-2.6px;" ><title>检查是否是内部</title><text x="0" y="0" font-size="14" fill="#6fbf6a">检查是否是内部</text></svg></span></div>
<div class="ln" style="top:149.70px"><span class="no">103</span><i class="gd" style="left:49px"></i><span class="tx" style="left:64.70px"><span class="f">checkneibuper</span><span class="b">()</span><span class="b">{</span></span></div>
<div class="ln" style="top:168.70px"><span class="no">104</span><i class="gd" style="left:49px"></i><i class="gd" style="left:64px"></i><span class="tx" style="left:80.10px"><span class="y">let</span><span class="w"> that</span><span class="y">=</span><span class="t">this</span></span></div>
<div class="ln" style="top:187.70px"><span class="no">105</span><i class="gd" style="left:49px"></i><i class="gd" style="left:64px"></i><span class="tx" style="left:80.10px"><span class="y">let</span><span class="w"> isneibuper</span><span class="y">=</span></span></div>
<div class="ln" style="top:206.70px"><span class="no">106</span><i class="gd" style="left:49px"></i><i class="gd" style="left:64px"></i><span class="tx" style="left:80.10px"><span class="k">if</span><span class="g">(</span><span class="w">app</span><span class="d">.</span><span class="w">globalD</span></span></div>
<div class="ln" style="top:225.70px"><span class="no">107</span><i class="gd" style="left:49px"></i><i class="gd" style="left:64px"></i><i class="gd" style="left:80px"></i><span class="tx" style="left:95.50px"><span class="w">dosql</span><span class="d">.</span><span class="f">isneibu</span></span></div>
<div class="ln" style="top:244.70px"><span class="no">108</span><i class="gd" style="left:49px"></i><i class="gd" style="left:64px"></i><i class="gd" style="left:80px"></i><i class="gd" style="left:95px"></i><span class="tx" style="left:110.90px"><span class="k">if</span><span class="g">(</span><span class="w">app</span><span class="d">.</span><span class="w">glo</span></span></div>
<div class="ln" style="top:263.70px"><span class="no">109</span><i class="gd" style="left:49px"></i><i class="gd" style="left:64px"></i><i class="gd" style="left:80px"></i><i class="gd" style="left:95px"></i><i class="gd" style="left:110px"></i><span class="tx" style="left:126.30px"><span class="w">isneibup</span></span></div>
<div class="ln" style="top:282.70px"><span class="no">110</span><i class="gd" style="left:49px"></i><i class="gd" style="left:64px"></i><i class="gd" style="left:80px"></i><i class="gd" style="left:95px"></i><span class="tx" style="left:110.90px"><span class="g">}</span></span></div>
<div class="ln" style="top:301.70px"><span class="no">111</span><i class="gd" style="left:49px"></i><i class="gd" style="left:64px"></i><i class="gd" style="left:80px"></i><i class="gd" style="left:95px"></i><span class="tx" style="left:110.90px"><span class="w">that</span><span class="d">.</span><span class="f">setDa</span></span></div>
<div class="ln" style="top:320.70px"><span class="no">112</span><i class="gd" style="left:49px"></i><i class="gd" style="left:64px"></i><i class="gd" style="left:80px"></i><i class="gd" style="left:95px"></i><i class="gd" style="left:110px"></i><span class="tx" style="left:126.30px"><span class="v">isneibup</span></span></div>
<div class="ln" style="top:339.70px"><span class="no">113</span><i class="gd" style="left:49px"></i><i class="gd" style="left:64px"></i><i class="gd" style="left:80px"></i><i class="gd" style="left:95px"></i><span class="tx" style="left:110.90px"><span class="p">}</span><span class="g">)</span></span></div>
<div class="ln" style="top:358.70px"><span class="no">114</span><i class="gd" style="left:49px"></i><i class="gd" style="left:64px"></i><i class="gd" style="left:80px"></i><i class="gd" style="left:95px"></i><span class="tx" style="left:110.90px"><span class="w">that</span><span class="d">.</span><span class="f">isnei</span></span></div>
<div class="ln" style="top:377.70px"><span class="no">115</span><i class="gd" style="left:49px"></i><i class="gd" style="left:64px"></i><i class="gd" style="left:80px"></i><span class="tx" style="left:95.50px"><span class="b">}</span><span class="w">, </span><span class="b">(</span><span class="s">error</span><span class="b">)</span><span class="w"> =&gt;</span></span></div>
<div class="ln" style="top:396.70px"><span class="no">116</span><i class="gd" style="left:49px"></i><i class="gd" style="left:64px"></i><i class="gd" style="left:80px"></i><i class="gd" style="left:95px"></i><span class="tx" style="left:110.90px"><span class="w">that</span><span class="d">.</span><span class="f">setDa</span></span></div>
<div class="ln" style="top:415.70px"><span class="no">117</span><i class="gd" style="left:49px"></i><i class="gd" style="left:64px"></i><i class="gd" style="left:80px"></i><i class="gd" style="left:95px"></i><i class="gd" style="left:110px"></i><span class="tx" style="left:126.30px"><span class="v">isneibup</span></span></div>
<div class="ln" style="top:434.70px"><span class="no">118</span><i class="gd" style="left:49px"></i><i class="gd" style="left:64px"></i><i class="gd" style="left:80px"></i><i class="gd" style="left:95px"></i><span class="tx" style="left:110.90px"><span class="p">}</span><span class="g">)</span></span></div>
<div class="ln" style="top:453.70px"><span class="no">119</span><i class="gd" style="left:49px"></i><i class="gd" style="left:64px"></i><i class="gd" style="left:80px"></i><i class="gd" style="left:95px"></i><span class="tx" style="left:110.90px"><span class="w">that</span><span class="d">.</span><span class="f">isnei</span></span></div>
<div class="ln" style="top:472.70px"><span class="no">120</span><i class="gd" style="left:49px"></i><i class="gd" style="left:64px"></i><i class="gd" style="left:80px"></i><i class="gd" style="left:95px"></i><span class="tx" style="left:110.90px"><span class="w">console</span><span class="d">.</span><span class="f">lo</span></span></div>
<div class="ln" style="top:491.70px"><span class="no">121</span><i class="gd" style="left:49px"></i><i class="gd" style="left:64px"></i><i class="gd" style="left:80px"></i><span class="tx" style="left:95.50px"><span class="b">}</span><span class="p">)</span><span class="c">//promise</span></span></div>
<div class="ln" style="top:510.70px"><span class="no">122</span><i class="gd" style="left:49px"></i><i class="gd" style="left:64px"></i><span class="tx" style="left:80.10px"><span class="g">}</span><span class="k">else</span><span class="g">{</span></span></div>
<div class="ln" style="top:529.70px"><span class="no">123</span><i class="gd" style="left:49px"></i><i class="gd" style="left:64px"></i><i class="gd" style="left:80px"></i><span class="tx" style="left:95.50px"><span class="k">if</span><span class="p">(</span><span class="w">app</span><span class="d">.</span><span class="w">globa</span></span></div>
<div class="ln" style="top:548.70px"><span class="no">124</span><i class="gd" style="left:49px"></i><i class="gd" style="left:64px"></i><i class="gd" style="left:80px"></i><i class="gd" style="left:95px"></i><span class="tx" style="left:110.90px"><span class="w">isneibuper</span></span></div>
<div class="ln" style="top:567.70px"><span class="no">125</span><i class="gd" style="left:49px"></i><i class="gd" style="left:64px"></i><i class="gd" style="left:80px"></i><span class="tx" style="left:95.50px"><span class="p">}</span></span></div>
<div class="ln" style="top:586.70px"><span class="no">126</span><i class="gd" style="left:49px"></i><i class="gd" style="left:64px"></i><i class="gd" style="left:80px"></i><span class="tx" style="left:95.50px"><span class="w">that</span><span class="d">.</span><span class="f">setData</span></span></div>
<div class="ln" style="top:605.70px"><span class="no">127</span><i class="gd" style="left:49px"></i><i class="gd" style="left:64px"></i><i class="gd" style="left:80px"></i><i class="gd" style="left:95px"></i><span class="tx" style="left:110.90px"><span class="v">isneibuper</span></span></div>
<div class="ln" style="top:624.70px"><span class="no">128</span><i class="gd" style="left:49px"></i><i class="gd" style="left:64px"></i><i class="gd" style="left:80px"></i><span class="tx" style="left:95.50px"><span class="b">}</span><span class="p">)</span></span></div>
<div class="ln" style="top:643.70px"><span class="no">129</span><i class="gd" style="left:49px"></i><i class="gd" style="left:64px"></i><i class="gd" style="left:80px"></i><span class="tx" style="left:95.50px"><span class="w">that</span><span class="d">.</span><span class="f">isneibu</span></span></div>
<div class="ln" style="top:662.70px"><span class="no">130</span><i class="gd" style="left:49px"></i><i class="gd" style="left:64px"></i><span class="tx" style="left:80.10px"><span class="g">}</span><span class="c">//if</span></span></div>
 </div></div>
 <div id="hs"></div>
 <div id="panel">
  <div class="abs" style="left:0;top:5.800px;width:178px;height:1px;background:#414141"></div>
  <div class="abs" style="left:20.800px;top:18.600px"><svg role="img" aria-label="构建" width="22.00" height="11.00" viewBox="0 -9.68 22.00 11.00" style="display:block;overflow:visible;" ><title>构建</title><text x="0" y="0" font-size="11" fill="#8c8c8c">构建</text></svg></div>
  <div class="abs" style="left:66.800px;top:18.600px"><svg role="img" aria-label="调试器" width="33.00" height="11.00" viewBox="0 -9.68 33.00 11.00" style="display:block;overflow:visible;" ><title>调试器</title><text x="0" y="0" font-size="11" fill="#e4e4e4">调试器</text></svg></div>
  <div class="abs" style="left:109.500px;top:15.700px;width:32px;height:16px;border-radius:8px;background:#d84a4a;color:#fff;font-size:11px;line-height:16.4px;text-align:center;letter-spacing:.3px">9,99</div>
  <div class="abs" style="left:164.500px;top:18.600px"><svg role="img" aria-label="问题" width="22.00" height="11.00" viewBox="0 -9.68 22.00 11.00" style="display:block;overflow:visible;" ><title>问题</title><text x="0" y="0" font-size="11" fill="#8c8c8c">问题</text></svg></div>
 </div>
</div>

</div>
</body>
</html>
